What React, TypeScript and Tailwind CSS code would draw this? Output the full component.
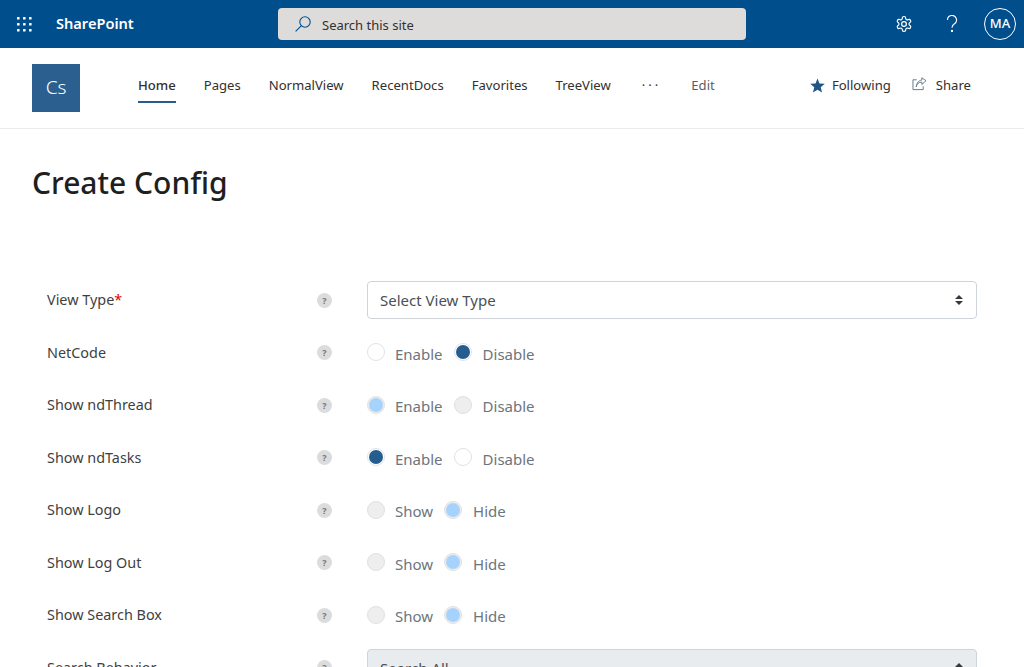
import React from "react";

const F = "font-['Open_Sans','Noto_Sans',sans-serif]";

function Help() {
  return (
    <span className="flex h-[15px] w-[15px] items-center justify-center rounded-full bg-[#dcdcdc] text-[9px] font-bold leading-none text-[#777777]">?</span>
  );
}

type RS = "off" | "on" | "disOff" | "disOn";
function Radio({ s }: { s: RS }) {
  const cls: Record<RS, string> = {
    off: "border border-[#dee2e6] bg-white",
    on: "border border-[#dee2e6] bg-white",
    disOff: "border border-[#e0e0e0] bg-[#eeeeee]",
    disOn: "border border-[#e0e0e0] bg-[#eeeeee]",
  };
  return (
    <span className={`relative mt-[-1px] inline-flex h-[18px] w-[18px] shrink-0 items-center justify-center rounded-full ${cls[s]}`}>
      {s === "on" && <span className="h-[14px] w-[14px] rounded-full bg-[#255d8f]" />}
      {s === "disOn" && <span className="h-[14px] w-[14px] rounded-full bg-[#a6d3fd]" />}
    </span>
  );
}

function RadioPair({ a, b, sa, sb }: { a: string; b: string; sa: RS; sb: RS }) {
  return (
    <div className="flex items-center text-[15px] text-[#6c757d]">
      <Radio s={sa} />
      <span className="ml-[10px] mt-[2px] mr-[11px]">{a}</span>
      <Radio s={sb} />
      <span className="ml-[11px] mt-[2px]">{b}</span>
    </div>
  );
}

function Row({ label, req, children }: { label: string; req?: boolean; children: React.ReactNode }) {
  return (
    <div className="flex h-[52.5px] shrink-0 items-center">
      <div className="w-[270px] text-[14.4px] text-[#3f3f3f]">
        {label}
        {req && <span className="text-[#e00000]">*</span>}
      </div>
      <div className="flex w-[50px]"><Help /></div>
      {children}
    </div>
  );
}

function Chevrons() {
  return (
    <svg width="10" height="12" viewBox="0 0 10 12" className="text-[#343a40]" fill="currentColor">
      <path d="M5 1 L9 5 L1 5 Z M5 11 L1 7 L9 7 Z" />
    </svg>
  );
}

function Select({ text, disabled }: { text: string; disabled?: boolean }) {
  return (
    <div className={`flex h-[38px] w-[610px] items-center justify-between rounded-[4px] border border-[#ced4da] pl-3 pr-[12px] text-[15px] text-[#495057] ${disabled ? "bg-[#e9ecef]" : "bg-white"}`}>
      <span>{text}</span>
      <Chevrons />
    </div>
  );
}

const nav = ["Pages", "NormalView", "RecentDocs", "Favorites", "TreeView"];

export default function App() {
  return (
    <div className={`flex h-[667px] w-[1024px] flex-col overflow-hidden bg-white ${F}`}>
      <header className="flex h-[48px] shrink-0 items-center bg-[#004e8c] text-white">
        <div className="flex w-[48px] justify-center">
          <svg width="16" height="16" viewBox="0 0 16 16" fill="white">
            {[1, 7, 13].flatMap((y) => [1, 7, 13].map((x) => <rect key={`${x}-${y}`} x={x} y={y} width="2.6" height="2.6" rx="0.6" />))}
          </svg>
        </div>
        <span className="ml-2 w-[222px] text-[14.6px] font-semibold">SharePoint</span>
        <div className="flex h-[32px] w-[468px] items-center rounded-[4px] bg-[#dedcdb] pl-4 text-[13px] text-[#323130]">
          <svg width="18" height="18" viewBox="0 0 18 18" fill="none" stroke="#004e8c" strokeWidth="1.1" className="mr-[10px]">
            <circle cx="11" cy="7" r="5.2" />
            <path d="M7.2 10.8 L1.6 16.4" />
          </svg>
          <span className="pt-[3px]">Search this site</span>
        </div>
        <div className="ml-auto flex items-center">
          <svg width="18" height="18" viewBox="0 0 24 24" fill="none" stroke="white" strokeWidth="1.6" strokeLinejoin="round" className="mr-[33px]">
            <path d="M12.2 2h-.4a2 2 0 0 0-2 2v.2a2 2 0 0 1-1 1.7l-.4.3a2 2 0 0 1-2 0l-.2-.1a2 2 0 0 0-2.7.7l-.2.4a2 2 0 0 0 .7 2.7l.2.1a2 2 0 0 1 1 1.7v.5a2 2 0 0 1-1 1.7l-.2.1a2 2 0 0 0-.7 2.7l.2.4a2 2 0 0 0 2.7.7l.2-.1a2 2 0 0 1 2 0l.4.3a2 2 0 0 1 1 1.7v.2a2 2 0 0 0 2 2h.4a2 2 0 0 0 2-2v-.2a2 2 0 0 1 1-1.7l.4-.3a2 2 0 0 1 2 0l.2.1a2 2 0 0 0 2.7-.7l.2-.4a2 2 0 0 0-.7-2.7l-.2-.1a2 2 0 0 1-1-1.7v-.5a2 2 0 0 1 1-1.7l.2-.1a2 2 0 0 0 .7-2.7l-.2-.4a2 2 0 0 0-2.7-.7l-.2.1a2 2 0 0 1-2 0l-.4-.3a2 2 0 0 1-1-1.7V4a2 2 0 0 0-2-2Z" />
            <circle cx="12" cy="12" r="3.2" />
          </svg>
          <svg width="12" height="18" viewBox="0 0 12 18" fill="none" stroke="white" strokeWidth="1.1" className="mr-[26px]">
            <path d="M1.5 5 A4.5 4.5 0 1 1 8.2 8.9 C6.6 9.8 6 10.6 6 12.8" />
            <circle cx="6" cy="16" r="0.6" fill="white" />
          </svg>
          <span className="mr-[8px] flex h-[32px] w-[32px] items-center justify-center rounded-full border border-white text-[13px] font-medium">MA</span>
        </div>
      </header>

      <div className="flex h-[81px] shrink-0 items-center border-b border-[#edebe9] pb-[1px]">
        <div className="ml-[32px] flex h-[48px] w-[48px] items-center justify-center bg-[#2b5f8f] text-[19px] font-light text-white">Cs</div>
        <nav className="mb-[4px] ml-[58px] flex items-center text-[13.1px] text-[#323130]">
          <span className="relative mr-[28px] flex h-[44px] items-center font-medium">
            Home
            <span className="absolute inset-x-0 bottom-[5px] h-[2px] bg-[#255d8f]" />
          </span>
          {nav.map((n) => (
            <span key={n} className="mr-[28px]">{n}</span>
          ))}
          <span className="ml-[3px] mr-[30px] tracking-[3px]">···</span>
          <span className="text-[#605e5c]">Edit</span>
        </nav>
        <div className="mb-[4px] ml-auto mr-[53px] flex items-center text-[13.1px] text-[#323130]">
          <svg width="15" height="15" viewBox="0 0 16 16" fill="#1f5685" className="mr-[7px]">
            <path d="M8 0.5 L10.1 5.8 L15.8 6.2 L11.4 9.8 L12.9 15.5 L8 12.4 L3.1 15.5 L4.6 9.8 L0.2 6.2 L5.9 5.8 Z" />
          </svg>
          <span className="mr-[21px]">Following</span>
          <svg width="15" height="14" viewBox="0 0 16 15" fill="none" stroke="#5f7488" strokeWidth="1" className="mr-[9px] mt-[-3px]">
            <path d="M5 3 H1 V13.5 H12 V10" />
            <path d="M4.5 10.5 C5 7 7.5 5.5 10.5 5.5 V8 L15 4 L10.5 0.8 V3.3 C7 3.5 5 6.5 4.5 10.5 Z" />
          </svg>
          <span>Share</span>
        </div>
      </div>

      <main className="flex flex-1 flex-col pl-[32px]">
        <h1 className="mt-[30px] text-[30px] font-medium leading-[48px] text-[#201f1e]">Create Config</h1>
        <div className="ml-[15px] mt-[67px] flex flex-col">
          <Row label="View Type" req><Select text="Select View Type" /></Row>
          <Row label="NetCode"><RadioPair a="Enable" b="Disable" sa="off" sb="on" /></Row>
          <Row label="Show ndThread"><RadioPair a="Enable" b="Disable" sa="disOn" sb="disOff" /></Row>
          <Row label="Show ndTasks"><RadioPair a="Enable" b="Disable" sa="on" sb="off" /></Row>
          <Row label="Show Logo"><RadioPair a="Show" b="Hide" sa="disOff" sb="disOn" /></Row>
          <Row label="Show Log Out"><RadioPair a="Show" b="Hide" sa="disOff" sb="disOn" /></Row>
          <Row label="Show Search Box"><RadioPair a="Show" b="Hide" sa="disOff" sb="disOn" /></Row>
          <Row label="Search Behavior"><Select text="Search All" disabled /></Row>
        </div>
      </main>
    </div>
  );
}
